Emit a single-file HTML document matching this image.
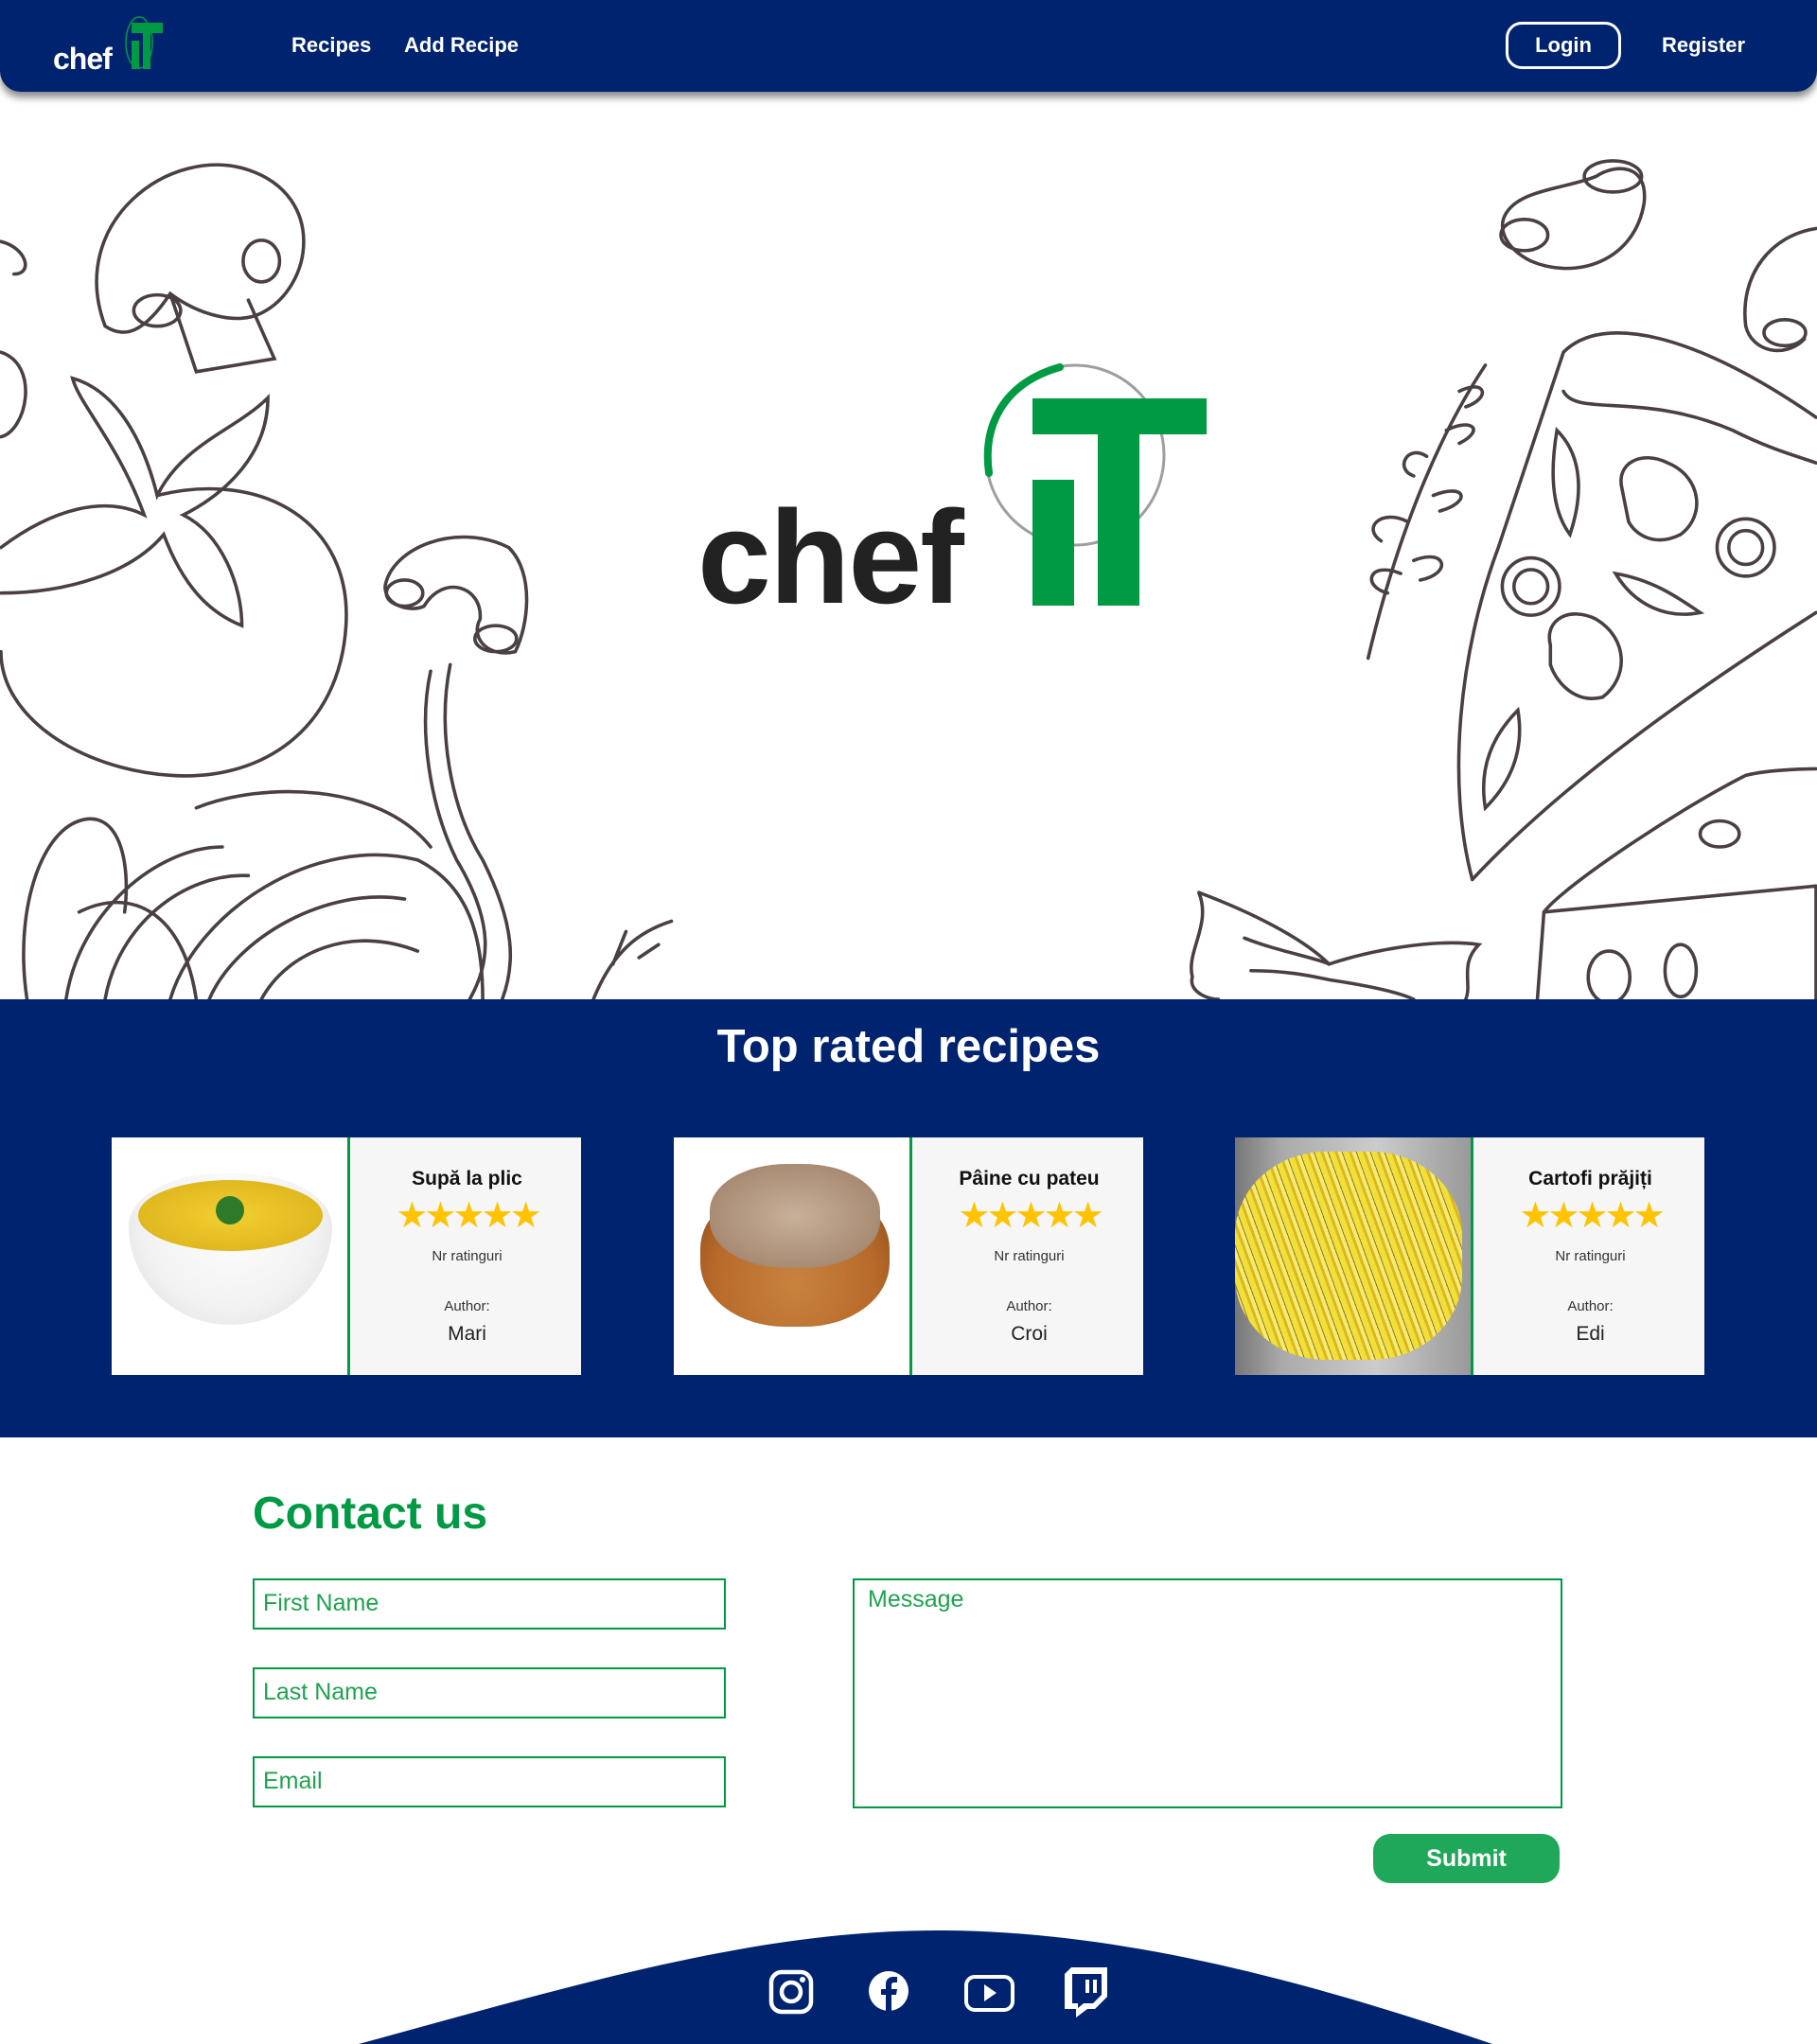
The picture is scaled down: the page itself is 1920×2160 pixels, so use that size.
<!DOCTYPE html>
<html><head><meta charset="utf-8"><style>
*{margin:0;padding:0;box-sizing:border-box}
body{width:1920px;height:2160px;position:relative;background:#fff;font-family:"Liberation Sans",sans-serif;overflow:hidden}
.abs{position:absolute}
.nav{left:0;top:0;width:1920px;height:97px;background:#00236f;border-radius:0 0 22px 22px;box-shadow:0 6px 8px rgba(0,0,0,.45)}
.nav a{position:absolute;color:#fff;font-size:22px;top:35px;text-decoration:none;font-weight:bold}
.band{left:0;top:1056px;width:1920px;height:463px;background:#00236f}
.card{position:absolute;top:1202px;width:496px;height:251px;background:#f6f6f6}
.card .img{position:absolute;left:0;top:0;width:252px;height:251px;background:#fff;border-right:3px solid #009a44;overflow:hidden}
.card .txt{position:absolute;left:255px;top:0;width:241px;text-align:center;color:#222}
.card h3{position:absolute;top:32px;width:100%;font-size:21px;font-weight:bold;color:#111}
.stars{position:absolute;top:64px;width:100%;font-size:38px;color:#ffc300;letter-spacing:-4px;line-height:38px}
.nr{position:absolute;top:117px;width:100%;font-size:15px;color:#333}
.au{position:absolute;top:170px;width:100%;font-size:15px;color:#333}
.nm{position:absolute;top:196px;width:100%;font-size:21px;color:#222}
.inp{position:absolute;border:2px solid #009a44;color:#1fa34f;font-size:25px;padding-left:9px;line-height:49px}
</style></head><body>

<svg class="abs" style="left:0;top:97px" width="1920" height="959" viewBox="0 70 1394 697" fill="none" stroke="#4a3f44" stroke-width="2.6" stroke-linecap="round">
 <path d="M80 250 C50 170 130 110 190 130 C250 150 240 220 200 240 C180 250 150 240 130 225 C110 255 95 260 80 250Z"/>
 <path d="M130 225 L150 285 L210 275 L190 230"/>
 <ellipse cx="120" cy="238" rx="18" ry="12"/><ellipse cx="200" cy="200" rx="14" ry="16"/>
 <path d="M120 380 C200 360 270 400 265 480 C260 560 200 600 130 595 C60 590 0 550 0 500"/>
 <path d="M0 420 C40 390 80 380 110 395 C90 340 60 310 55 290 C90 300 110 340 120 380 C140 340 180 330 205 305 C205 350 170 380 140 395 C170 410 185 450 185 480 C160 470 140 450 125 410 C100 440 50 455 0 455"/>
 <path d="M0 270 C30 280 20 330 0 335"/><path d="M0 185 C20 190 25 210 10 210"/>
 <path d="M295 450 C300 420 350 400 390 420 C410 440 405 480 395 500 C375 505 360 490 368 475 C370 450 340 440 325 465 C315 470 295 465 295 450Z"/>
 <ellipse cx="310" cy="455" rx="14" ry="10"/><ellipse cx="380" cy="490" rx="16" ry="10"/>
 <path d="M330 515 C320 560 330 620 350 660 C380 710 375 740 360 767"/>
 <path d="M345 510 C335 560 345 620 370 660 C395 710 395 740 385 767"/>
 <path d="M50 767 C60 700 120 650 170 650 M80 767 C90 710 140 670 190 672 M130 767 C150 700 240 640 320 660 C360 680 370 720 370 767 M160 767 C180 720 250 680 310 690 M200 767 C220 730 270 710 320 730 M20 767 C10 700 30 640 60 630 C90 620 100 660 95 700"/>
 <path d="M150 620 C200 600 290 600 330 650 M60 700 C100 680 140 700 150 767"/>
 <path d="M455 767 C470 730 490 715 515 707 M470 740 L480 715 M490 735 L505 725"/>
 <path d="M1155 165 C1165 145 1200 145 1225 135 C1240 125 1265 125 1262 155 C1255 200 1210 215 1175 200 C1155 190 1150 175 1155 165Z"/>
 <ellipse cx="1238" cy="135" rx="22" ry="12"/><ellipse cx="1170" cy="180" rx="18" ry="12"/>
 <path d="M1394 175 C1360 180 1335 210 1340 250 C1345 270 1370 275 1385 260"/><ellipse cx="1370" cy="255" rx="16" ry="10"/>
 <path d="M1050 505 C1070 420 1100 340 1140 280"/>
 <path d="M1080 400 C1060 390 1045 405 1060 415 M1075 440 C1050 430 1045 450 1065 455 M1095 350 C1080 340 1070 360 1085 365 M1110 330 C1130 320 1140 330 1120 340 M1100 380 C1125 370 1130 385 1105 392 M1085 430 C1110 420 1115 440 1090 445 M1120 300 C1140 290 1145 305 1125 312"/>
 <path d="M1130 675 C1110 600 1120 500 1150 420 C1170 360 1190 300 1200 270 C1230 240 1300 255 1394 320"/>
 <path d="M1130 675 C1200 600 1300 530 1394 470"/>
 <path d="M1200 300 C1210 320 1260 300 1330 330 C1360 345 1380 350 1394 355"/>
 <circle cx="1175" cy="450" r="22"/><circle cx="1175" cy="450" r="13"/>
 <circle cx="1340" cy="420" r="22"/><circle cx="1340" cy="420" r="13"/>
 <path d="M1245 375 C1240 355 1260 345 1280 355 C1305 365 1310 395 1290 410 C1270 420 1255 410 1250 400Z"/>
 <path d="M1190 495 C1185 475 1205 465 1225 475 C1250 490 1250 520 1230 535 C1210 540 1195 525 1190 510Z"/>
 <path d="M1195 330 C1215 350 1215 380 1205 410 C1190 390 1190 360 1195 330Z"/>
 <path d="M1165 545 C1170 575 1160 600 1140 620 C1135 590 1145 565 1165 545Z"/>
 <path d="M1240 440 C1270 445 1290 460 1305 470 C1280 475 1255 465 1240 440Z"/>
 <path d="M1185 700 C1200 680 1290 620 1340 595 C1360 590 1394 590 1394 590 M1185 700 L1394 680 M1185 700 L1180 767 M1394 680 L1394 767"/>
 <ellipse cx="1320" cy="640" rx="15" ry="10"/><ellipse cx="1290" cy="745" rx="12" ry="20"/><ellipse cx="1235" cy="750" rx="16" ry="20"/>
 <path d="M920 685 C960 700 1000 720 1020 740 C1050 730 1100 720 1135 725 C1120 740 1130 755 1125 767 M920 685 C930 710 910 730 915 750 C912 760 925 767 935 767 M955 720 C980 730 1010 735 1020 740 M960 745 C990 745 1010 750 1020 752 C1040 755 1070 760 1085 767"/>
</svg>

<div class="abs nav">
 <div class="abs" style="left:56px;top:44px;color:#fff;font-weight:bold;font-size:32px;letter-spacing:-1px">chef</div>
 <svg class="abs" style="left:125px;top:15px" width="60" height="62" viewBox="0 0 60 62">
  <ellipse cx="22" cy="30" rx="14" ry="27" fill="none" stroke="#009a44" stroke-width="1.5"/>
  <rect x="14" y="9" width="33" height="11" fill="#009a44"/><rect x="14" y="28" width="8" height="30" fill="#009a44"/><rect x="26" y="20" width="8" height="38" fill="#009a44"/>
 </svg>
 <a style="left:308px">Recipes</a><a style="left:427px">Add Recipe</a>
 <div class="abs" style="left:1591px;top:23px;width:122px;height:50px;border:3px solid #fff;border-radius:17px;color:#fff;font-size:22px;font-weight:bold;text-align:center;line-height:44px">Login</div>
 <a style="left:1756px">Register</a>
</div>

<div class="abs" style="left:737px;top:504px;font-size:140px;font-weight:bold;color:#222;letter-spacing:-2px;line-height:170px">chef</div>
<svg class="abs" style="left:1030px;top:380px" width="250" height="300" viewBox="1030 380 250 300">
 <ellipse cx="1136" cy="481" rx="94" ry="95" fill="none" stroke="#9e9e9e" stroke-width="3"/>
 <path d="M1045 500 C1038 450 1060 405 1120 388" fill="none" stroke="#009a44" stroke-width="8" stroke-linecap="round"/>
 <rect x="1091" y="421" width="184" height="38" fill="#009a44"/>
 <rect x="1091" y="507" width="44" height="133" fill="#009a44"/>
 <rect x="1160" y="455" width="44" height="185" fill="#009a44"/>
</svg>

<div class="abs band"></div>
<div class="abs" style="left:0;top:1078px;width:1920px;text-align:center;color:#fff;font-size:49px;font-weight:bold">Top rated recipes</div>

<div class="card" style="left:118px"><div class="img">
 <div class="abs" style="left:18px;top:38px;width:215px;height:160px;border-radius:45% 45% 50% 50%/35% 35% 65% 65%;background:radial-gradient(ellipse at 50% 30%,#fff 0,#f2f2f2 60%,#d8d8d8 100%)"></div>
 <div class="abs" style="left:28px;top:45px;width:195px;height:75px;border-radius:50%;background:radial-gradient(ellipse,#f2d030 0,#e0b820 70%,#c9a010 100%)"></div>
 <div class="abs" style="left:110px;top:62px;width:30px;height:30px;border-radius:50%;background:#2f7a2a"></div>
 </div><div class="txt"><h3>Supă la plic</h3><div class="stars">★★★★★</div><div class="nr">Nr ratinguri</div><div class="au">Author:</div><div class="nm">Mari</div></div></div>

<div class="card" style="left:712px"><div class="img">
 <div class="abs" style="left:28px;top:50px;width:200px;height:150px;border-radius:45%;background:radial-gradient(ellipse at 50% 70%,#c8833f 0,#b86a2a 60%,#8a4a1c 100%)"></div>
 <div class="abs" style="left:38px;top:28px;width:180px;height:110px;border-radius:45%;background:radial-gradient(ellipse,#c8b09a 0,#a98c74 70%,#8a6e58 100%)"></div>
 </div><div class="txt"><h3>Pâine cu pateu</h3><div class="stars">★★★★★</div><div class="nr">Nr ratinguri</div><div class="au">Author:</div><div class="nm">Croi</div></div></div>

<div class="card" style="left:1305px"><div class="img" style="background:linear-gradient(90deg,#777 0,#aaa 20%,#ccc 60%,#999 100%)">
 <div class="abs" style="left:0;top:15px;width:240px;height:220px;border-radius:40%;background:repeating-linear-gradient(70deg,#f2df3a 0 6px,#d9b820 6px 9px,#f7ea70 9px 13px,#8a7a30 13px 14px)"></div>
 </div><div class="txt"><h3>Cartofi prăjiți</h3><div class="stars">★★★★★</div><div class="nr">Nr ratinguri</div><div class="au">Author:</div><div class="nm">Edi</div></div></div>

<div class="abs" style="left:267px;top:1572px;color:#009a44;font-size:48px;font-weight:bold">Contact us</div>
<div class="inp" style="left:267px;top:1668px;width:500px;height:54px">First Name</div>
<div class="inp" style="left:267px;top:1762px;width:500px;height:54px">Last Name</div>
<div class="inp" style="left:267px;top:1856px;width:500px;height:54px">Email</div>
<div class="inp" style="left:901px;top:1668px;width:750px;height:243px;line-height:40px;padding-left:14px">Message</div>
<div class="abs" style="left:1451px;top:1938px;width:197px;height:52px;background:#1fa85a;border-radius:18px;color:#fff;font-size:25px;font-weight:bold;text-align:center;line-height:52px">Submit</div>

<svg class="abs" style="left:0;top:2030px" width="1920" height="130" viewBox="0 0 1920 130">
 <path d="M379 130 C600 70 800 8 1000 10 C1200 12 1400 70 1577 130Z" fill="#00236f"/>
 <g fill="none" stroke="#fff" stroke-width="4.5">
  <rect x="815" y="54" width="42" height="42" rx="11"/><circle cx="836" cy="75" r="10"/>
 </g>
 <circle cx="848" cy="62" r="3" fill="#fff"/>
 <circle cx="939" cy="74" r="21" fill="#fff"/>
 <path d="M936 96 V78 H931 V72 H936 V67 C936 62 939 59 944 59 H948 V65 H945 C943 65 942 66 942 68 V72 H948 L947 78 H942 V96Z" fill="#00236f"/>
 <rect x="1021" y="59" width="49" height="35" rx="9" fill="none" stroke="#fff" stroke-width="4"/>
 <path d="M1040 67 L1053 76 L1040 85Z" fill="#fff"/>
 <path d="M1132 49 H1170 V80 L1157 93 H1149 L1137 102 V93 H1125 V56Z" fill="#fff"/>
 <path d="M1133 56 H1164 V78 L1155 87 H1145 L1139 92 V87 H1133Z" fill="#00236f"/>
 <rect x="1147" y="62" width="4" height="14" fill="#fff"/><rect x="1155" y="62" width="4" height="14" fill="#fff"/>
</svg>
</body></html>
